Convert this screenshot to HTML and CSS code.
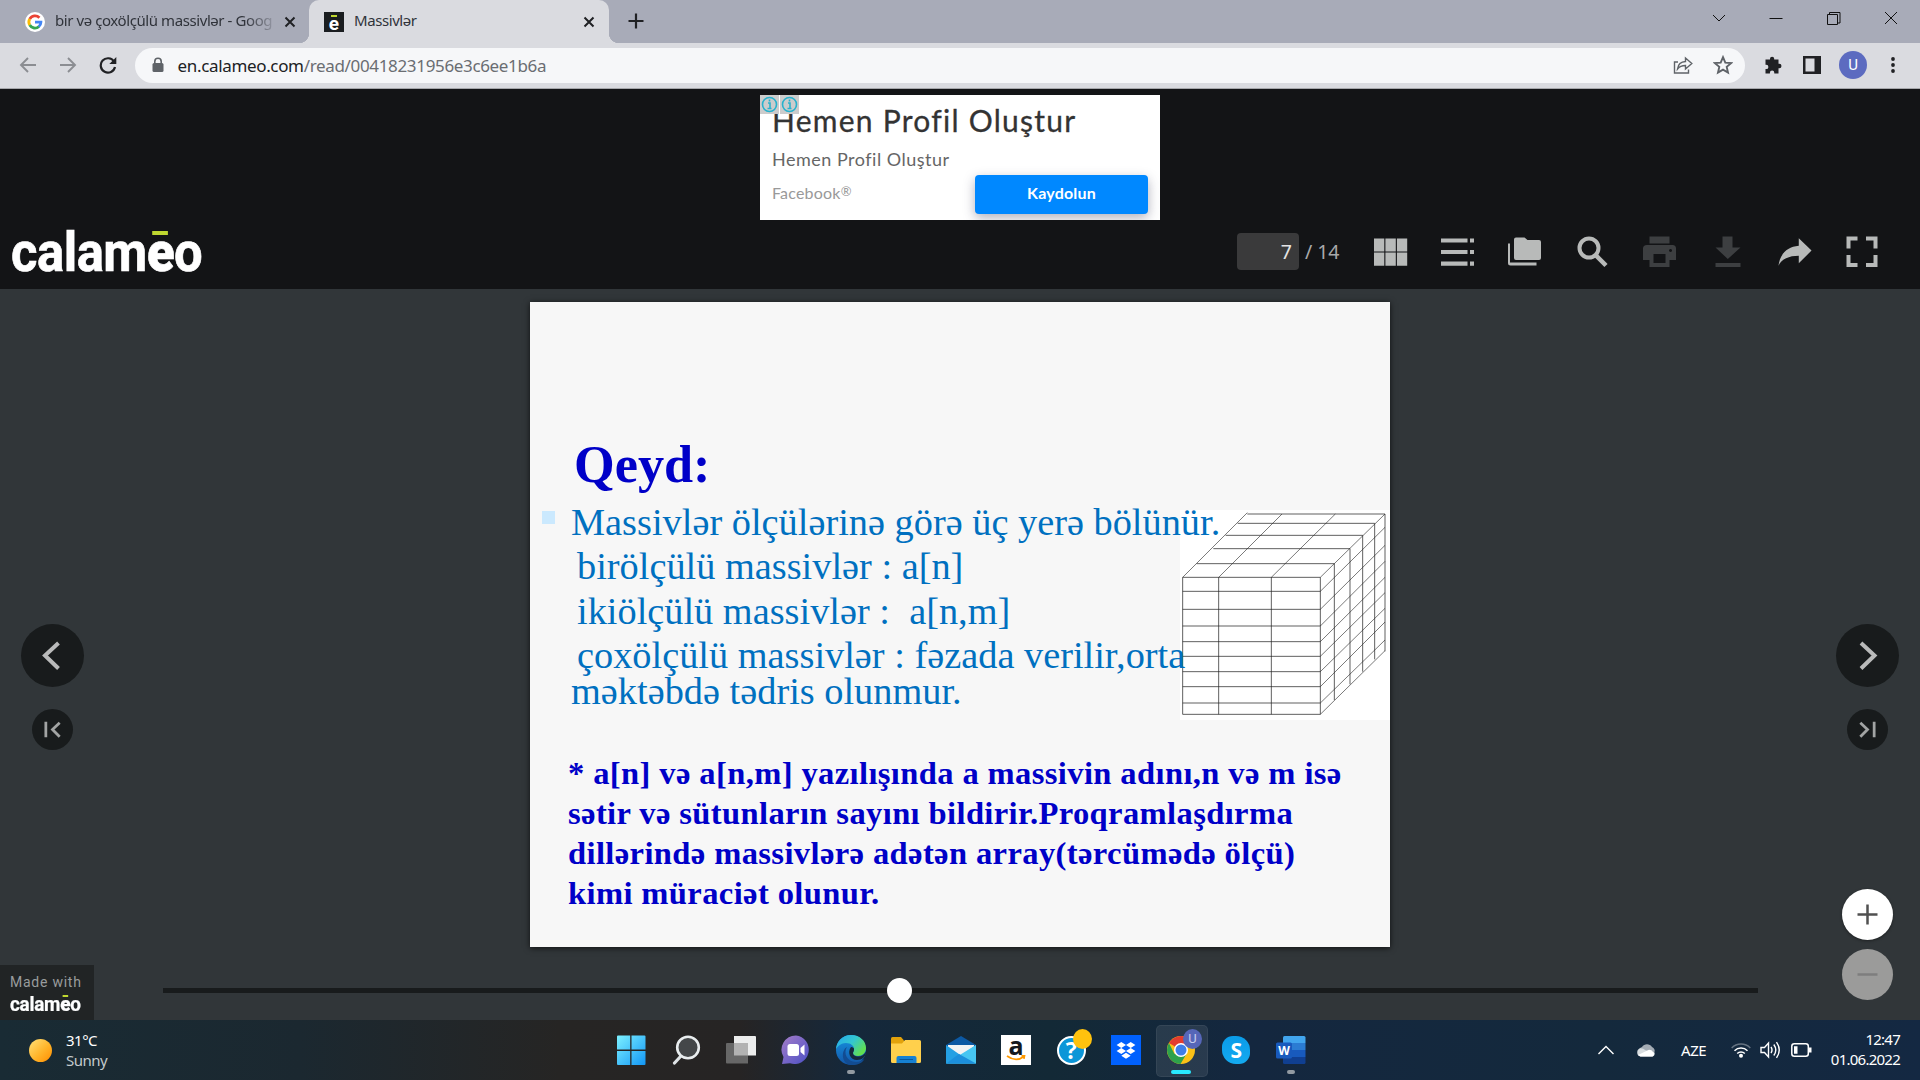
FILE: index.html
```html
<!DOCTYPE html>
<html lang="az">
<head>
<meta charset="utf-8">
<title>Massivlər</title>
<link rel="stylesheet" href="styles.css">
</head>
<body>
<div class="tabs">
  <div class="tab tab-idle">
    <svg class="fav" viewBox="0 0 20 20"><circle cx="10" cy="10" r="10" fill="#fff"/><g fill="none" stroke-width="2.8"><path d="M4.7 7A6 6 0 0 1 14.4 5.7" stroke="#ea4335"/><path d="M4.7 13A6 6 0 0 1 4.7 7" stroke="#fbbc05"/><path d="M14 14.5A6 6 0 0 1 4.7 13" stroke="#34a853"/><path d="M10 10.2H15.9A6 6 0 0 1 13.7 14.7" stroke="#4285f4"/></g></svg>
    <span class="tab-title fade">bir və çoxölçülü massivlər - Goog</span>
    <svg class="x" viewBox="0 0 12 12"><path d="M1.5 1.5l9 9M10.5 1.5l-9 9"/></svg>
  </div>
  <div class="tab tab-on">
    <span class="fav fav-e"><i></i>e</span>
    <span class="tab-title">Massivlər</span>
    <svg class="x" viewBox="0 0 12 12"><path d="M1.5 1.5l9 9M10.5 1.5l-9 9"/></svg>
  </div>
  <svg class="plus" viewBox="0 0 16 16"><path d="M8 .5v15M.5 8h15"/></svg>
  <div class="wincontrols">
    <svg viewBox="0 0 14 14"><path d="M1 4l6 6 6-6"/></svg>
    <svg viewBox="0 0 14 14"><path d="M.5 7.5h13"/></svg>
    <svg viewBox="0 0 14 14"><path d="M.5 3.5h10v10h-10zM2.5 3.500v-2h10.500v10.500h-2.500"/></svg>
    <svg viewBox="0 0 14 14"><path d="M1 1l12 12M13 1L1 13"/></svg>
  </div>
</div>

<div class="toolbar">
  <svg class="nav dim" viewBox="0 0 18 18"><path d="M17 9H2M9 2L2 9l7 7"/></svg>
  <svg class="nav dim" viewBox="0 0 18 18"><path d="M1 9h15M9 2l7 7-7 7"/></svg>
  <svg class="nav reload" viewBox="0 0 18 18"><path d="M15 5.500A7.200 7.200 0 1 0 16 11"/><path d="M17.300 1v7h-7z" fill="#202124" stroke="none"/></svg>
  <div class="omnibox">
    <svg class="lock" viewBox="0 0 12 16"><path d="M2.800 7V4.500a3.200 3.200 0 0 1 6.400 0V7" fill="none" stroke="#5f6368" stroke-width="1.600"/><rect x=".5" y="6" width="11" height="9" rx="1.500" fill="#5f6368"/></svg>
    <span class="url">en.calameo.com<em>/read/00418231956e3c6ee1b6a</em></span>
    <svg class="omni-icon" viewBox="0 0 20 20"><path d="M5 7H1.500v11h14v-3.500M4.500 14c.6-4.800 3.600-7.300 8-7.500V3l6.300 5.500-6.300 5.500v-3.500c-3.600 0-6 .9-8 3.500z"/></svg>
    <svg class="omni-icon star" viewBox="0 0 20 20"><path d="M10 2.200l2.300 5.400 5.800.5-4.400 3.800 1.300 5.700-5-3-5 3 1.300-5.700L1.900 8.100l5.800-.5z"/></svg>
  </div>
  <svg class="ext" viewBox="0 0 20 20"><path d="M2.500 4.500h4.500V3.800a2.100 2.100 0 0 1 4.200 0v.7H15.500v4.300h.8a2.200 2.200 0 0 1 0 4.400h-.8V18.500h-4.200V17.800a2.200 2.200 0 0 0-4.400 0v.7H2.500v-4.400H3.200a2.200 2.200 0 0 0 0-4.400h-.7V4.500z" fill="#202124"/></svg>
  <svg class="panel" viewBox="0 0 18 18"><path d="M0 0h18v18H0zM2.500 2.500v13h9v-13z" fill="#202124" fill-rule="evenodd"/></svg>
  <span class="avatar">U</span>
  <svg class="dots" viewBox="0 0 4 18"><circle cx="2" cy="3" r="1.900"/><circle cx="2" cy="9" r="1.900"/><circle cx="2" cy="15" r="1.900"/></svg>
</div>

<header class="head">
  <div class="adband">
    <div class="ad">
      <div class="adchoices">
        <svg viewBox="0 0 19 19"><circle cx="9.500" cy="9.500" r="7"/><path d="M8 8h2v5M7.500 13.500h4M9.500 4.500v2"/></svg>
        <svg viewBox="0 0 19 19"><circle cx="9.500" cy="9.500" r="7"/><path d="M8 8h2v5M7.500 13.500h4M9.500 4.500v2"/></svg>
      </div>
      <div class="ad-title">Hemen Profil Oluştur</div>
      <div class="ad-sub">Hemen Profil Oluştur</div>
      <div class="ad-row"><span class="ad-brand">Facebook<sup>®</sup></span><span class="ad-btn">Kaydolun</span></div>
    </div>
  </div>
  <div class="bar">
    <div class="logo"><span>calam<b>e</b>o</span></div>
    <div class="tools">
      <span class="pagebox">7</span><span class="total">/ 14</span>
      <span class="tool"><svg viewBox="0 0 34 32"><path d="M0 2.500h10.300v13H0zM11.400 2.500h10.400v13H11.400zM22.900 2.500h10.300v13H22.900zM0 16.500h10.300v13.200H0zM11.400 16.500h10.400v13.200H11.400zM22.900 16.500h10.300v13.200H22.900z"/></svg></span>
      <span class="tool"><svg viewBox="0 0 34 32"><path d="M0 2.500h26.500v4H0zM29 2.500h4v4h-4zM0 14h26.500v4H0zM29 14h4v4h-4zM0 25.500h26.500v4.200H0zM29 25.500h4v4.200h-4z"/></svg></span>
      <span class="tool"><svg viewBox="0 0 34 32"><path d="M8 1.500h8.500L19.500 4H31q2 0 2 2v16q0 2-2 2H8q-2 0-2-2V3.500q0-2 2-2z"/><path d="M0 7.500h2V26.500h26.500v3H2.500q-2.500 0-2.500-2.500z"/></svg></span>
      <span class="tool"><svg viewBox="0 0 34 32"><circle cx="13" cy="12" r="9.500" fill="none" stroke="#b8bab9" stroke-width="4"/><path d="M19 18.500l11 11" stroke="#b8bab9" stroke-width="4.500"/></svg></span>
      <span class="tool off"><svg viewBox="0 0 34 32"><path fill-rule="evenodd" d="M6.500 .5h20v7h-20zM4 9h25.500q3.500 0 3.500 3.500V24h-6.500v7h-20v-7H0V12.500Q0 9 4 9zM10.500 18v9h12v-9zM27.500 13a1.500 1.500 0 1 0 .1 0z"/></svg></span>
      <span class="tool off"><svg viewBox="0 0 34 32"><path d="M11.500 .5h10v11h8L16.800 23 4.500 11.500h7zM4.500 27h25v4h-25z"/></svg></span>
      <span class="tool"><svg viewBox="0 0 36 32"><path d="M22 1.500L35.500 14.500 22 28v-8C11.500 20 4 23.500.5 30.500 2 19 9 10.500 22 9.500z"/></svg></span>
      <span class="tool"><svg viewBox="0 0 34 32"><path d="M1.500 .5h11v4h-7v8h-4zM21 .5h11.500v12h-4v-8H21zM1.500 19h4v8h7v4h-11zM28.500 19h4v12H21v-4h7.500z"/></svg></span>
    </div>
  </div>
</header>

<main class="viewer">
  <div class="side left">
    <span class="round"><svg viewBox="0 0 63 63"><path d="M37.500 19L24 31.500 37.500 44.500"/></svg></span>
    <span class="round small"><svg viewBox="0 0 40 40"><path d="M13.500 12.500v15M27 13.500l-7 6.500 7 7"/></svg></span>
    <div class="made"><span>Made with</span><div class="logo mini"><span>calam<b>e</b>o</span></div></div>
  </div>
  <div class="center">
    <article class="slide">
      <svg class="cube" viewBox="60 60 630 630"><path fill="#fff" d="M60 60h630v630H60z"/><g fill="none" stroke="#222" stroke-opacity=".72" stroke-width="3"><path d="M68 262H481V673H68zM68 304H481M68 358H481M68 408H481M68 455H481M68 499H481M68 545H481M68 590H481M68 639H481M176 262V673M334 262V673M110 221H523V630M160 176H570V583M197 136H608V545M233 100H644V508M262 72H675V484"/><path stroke-opacity=".6" d="M68 262L262 68M176 262L366 72M334 262L526 72M481 262L675 72M481 304L675 112M481 358L675 166M481 408L675 214M481 455L675 262M481 499L675 308M481 545L675 355M481 590L675 396M481 639L675 450M481 673L675 482"/></g></svg>
      <h1>Qeyd:</h1>
      <div class="list">
        <i class="bullet"></i>
        <div>
          <p>Massivlər ölçülərinə görə üç yerə bölünür.</p>
          <p class="in">birölçülü massivlər : a[n]</p>
          <p class="in">ikiölçülü massivlər :&nbsp; a[n,m]</p>
          <p class="in">çoxölçülü massivlər : fəzada verilir,orta</p>
          <p class="tight">məktəbdə tədris olunmur.</p>
        </div>
      </div>
      <div class="note">
        <p>* a[n] və a[n,m] yazılışında a massivin adını,n və m isə</p>
        <p>sətir və sütunların sayını bildirir.Proqramlaşdırma</p>
        <p>dillərində massivlərə adətən array(tərcümədə ölçü)</p>
        <p>kimi müraciət olunur.</p>
      </div>
    </article>
    <div class="slider"><i class="knob"></i></div>
  </div>
  <div class="side right">
    <span class="round"><svg viewBox="0 0 63 63"><path d="M25 19l13.500 12.500L25 44.500"/></svg></span>
    <span class="round small"><svg viewBox="0 0 40 40"><path d="M26.500 12.500v15M13 13.500l7 6.500-7 7"/></svg></span>
    <span class="zoom"><svg viewBox="0 0 51 51"><path d="M25.500 15.500v20M15.500 25.500h20"/></svg></span>
    <span class="zoom off"><svg viewBox="0 0 51 51"><path d="M15.500 25.500h20"/></svg></span>
  </div>
</main>

<footer class="taskbar">
  <div class="weather">
    <i class="sun"></i>
    <div><div>31°C</div><div class="cond">Sunny</div></div>
  </div>
  <div class="apps">
    <span class="app"><svg viewBox="0 0 30 30"><defs><linearGradient id="w" x1="0" y1="0" x2="1" y2="1"><stop offset="0" stop-color="#7df1ff"/><stop offset="1" stop-color="#1296f5"/></linearGradient></defs><path fill="url(#w)" d="M2 .5h12.200v14H1V1.500q0-1 1-1zM15.500.5H28.500q1 0 1 1v13h-14zM1 16h13.200v14H2q-1 0-1-1zM15.500 16h14v13q0 1-1 1h-13z"/></svg></span>
    <span class="app"><svg viewBox="0 0 30 30"><path d="M10 21L3.500 28" stroke="#dfe3e6" stroke-width="3.200" stroke-linecap="round"/><circle cx="17" cy="12.500" r="10.800" fill="#444749" stroke="#e9edef" stroke-width="2.600"/></svg></span>
    <span class="app"><svg viewBox="0 0 30 30"><path d="M8 1h21q1 0 1 1v18.500H8z" fill="#eceded"/><path d="M1 8h21v20.500H1q-1 0-1-1V9q0-1 1-1z" fill="#676767"/><path d="M8 8h14v12.500H8z" fill="#b2b2b2"/></svg></span>
    <span class="app"><svg viewBox="0 0 30 30"><defs><linearGradient id="t" x1="0" y1="0" x2="1" y2="1"><stop offset="0" stop-color="#a77fc4"/><stop offset=".3" stop-color="#8a6fc8"/><stop offset="1" stop-color="#4b50c4"/></linearGradient></defs><path d="M15 .5A14.300 14.300 0 1 1 9 28.300L1 29l1.500-7A14.300 14.300 0 0 1 15 .5z" fill="url(#t)"/><rect x="6.500" y="9" width="11.500" height="12" rx="2.500" fill="#fff"/><path d="M19.500 13l4-3.500v11l-4-3.500z" fill="#fff"/></svg></span>
    <span class="app"><svg viewBox="0 0 30 30"><defs><linearGradient id="e1" x1="0" y1="0" x2="1" y2=".6"><stop offset="0" stop-color="#24a7ee"/><stop offset=".55" stop-color="#34c7cf"/><stop offset="1" stop-color="#62e04f"/></linearGradient><linearGradient id="e2" x1="0" y1="0" x2="0" y2="1"><stop offset="0" stop-color="#1595e3"/><stop offset="1" stop-color="#1356a8"/></linearGradient></defs><circle cx="15" cy="15" r="15" fill="url(#e2)"/><path d="M15 0C24 0 30 6 30 13c0 5-4 8-8 8-3 0-5-1-5-3 0-1 1-1.500 1-4 0-3-3-6-8-6-6 0-10 5-10 7C0 7 6 0 15 0z" fill="url(#e1)"/><path d="M11 12c-4 6 0 15 9 15 4 0 6-1.500 8.500-3C25 30 19 30 15 30 5 29 5 15 11 12z" fill="#124c92"/><path d="M18 14c0 3-1 3-1 4 0 2 2 3.500 5 3.500 3.500 0 6.500-2 8-5C30 22 26 25 21 25c-7 0-10-8-6-13 2 0 3 1 3 2z" fill="#15293b"/></svg><i></i></span>
    <span class="app"><svg viewBox="0 0 30 30"><path d="M0 3.500q0-1.500 1.500-1.500H10l3 3.500V12H0z" fill="#e2a20b"/><path d="M0 8.500h11l3-3.500h14.500Q30 5 30 6.500v20q0 1.500-1.500 1.500h-27Q0 28 0 26.500z" fill="#ffd04c"/><path d="M5.500 28v-5q0-2 2-2h16q2 0 2 2v5z" fill="#1681d3"/><path d="M8.500 24.500h13.500" stroke="#0a579b"/></svg></span>
    <span class="app"><svg viewBox="0 0 30 30"><path d="M0 10L15 1l15 9v4H0z" fill="#0c59a4"/><path d="M2 10h26v10H2z" fill="#f2f3f4"/><path d="M0 10l15 10.500L30 10v18.500H0z" fill="#24a0e4"/><path d="M0 28.500L30 10v18.500z" fill="#47c6f2"/><path d="M13 19L30 28.500H0z" fill="#1c8fdc"/></svg></span>
    <span class="app"><span class="amazon">a<svg viewBox="0 0 20 6"><path d="M1 1q9 6.500 17 .5M15.500.8l3 0-.6 3" fill="none" stroke="#f90" stroke-width="1.700"/></svg></span></span>
    <span class="app"><span class="help">?</span><b class="badge yellow"></b></span>
    <span class="app"><svg viewBox="0 0 30 30"><path fill="#0061fe" d="M0 0h30v30H0z"/><path fill="#fff" d="M10.300 7l4.700 3-4.700 3-4.700-3zM19.700 7l4.700 3-4.700 3-4.700-3zM10.300 13l4.700 3-4.700 3-4.700-3zM19.700 13l4.700 3-4.700 3-4.700-3zM15 17.800l4.700 3-4.700 3-4.700-3z"/></svg></span>
    <span class="app active"><svg viewBox="0 0 30 30"><circle cx="15" cy="15" r="14" fill="#fbc116"/><path d="M15 15L2.900 8A14 14 0 0 1 27.100 8z" fill="#e33b2e"/><path d="M15 15L8.500 19 2.900 8A14 14 0 0 0 14.500 29L21 18z" fill="#2da14b"/><path d="M15 8h12.100L15 15 8 11z" fill="#e33b2e"/><circle cx="15" cy="15" r="7" fill="#fff"/><circle cx="15" cy="15" r="5.500" fill="#3f7ee8"/></svg><b class="badge">U</b><i></i></span>
    <span class="app"><span class="skype">S</span></span>
    <span class="app"><svg viewBox="0 0 30 30"><path d="M7 2.500q0-1.500 1.500-1.500h19.500q1.500 0 1.500 1.500V8H7z" fill="#41a5ee"/><path d="M7 8h22.500v7H7z" fill="#2b7cd3"/><path d="M7 15h22.500v7H7z" fill="#185abd"/><path d="M7 22h22.500v5.500q0 1.500-1.500 1.500H8.500Q7 29 7 27.500z" fill="#103f91"/><rect y="7.500" width="16" height="16" rx="1.500" fill="#185abd"/><text x="8" y="19.800" class="wtext">W</text></svg><i></i></span>
  </div>
  <div class="tray">
    <svg class="up" viewBox="0 0 16 10"><path d="M.5 9L8 1.500 15.500 9" fill="none" stroke="#fff" stroke-width="1.400"/></svg>
    <svg class="cloud" viewBox="0 0 20 14"><path d="M3 9a4 4 0 0 1 3-5 6 6 0 0 1 10 0 4 4 0 0 1 2 6z" fill="#a5adb5"/><path d="M4.500 13.500a4.200 4.200 0 0 1 0-8.200q3 0 5 2l9 2.200a3 3 0 0 1-2 4z" fill="#d8dde0"/><path d="M2 12L13 6.800q3 .2 3.800 2a2.700 2.700 0 0 1-.3 4.700h-12z" fill="#fff"/></svg>
    <span class="lang">AZE</span>
    <svg class="wifi" viewBox="0 0 20 16"><g fill="none" stroke="#fff" stroke-width="1.500"><path d="M.7 6a13 13 0 0 1 18.600 0" opacity=".35"/><path d="M3.500 8.800a9.200 9.200 0 0 1 13 0M6.200 11.500a5.400 5.400 0 0 1 7.600 0"/></g><circle cx="10" cy="13.700" r="2" fill="#fff"/></svg>
    <svg class="vol" viewBox="0 0 21 18"><g fill="none" stroke="#fff" stroke-width="1.400"><path d="M1 6.500h3.500L8.500 2v14l-4-4.500H1z"/><path d="M11 6q2 3 0 6M13.800 3.500q4 5.500 0 11M16.500 1.200q5.500 7.800 0 15.600"/></g></svg>
    <svg class="bat" viewBox="0 0 21 14"><rect x=".8" y=".8" width="16.500" height="12.400" rx="2.500" fill="none" stroke="#fff" stroke-width="1.500"/><path d="M3 3.200h3.500v7.600H3zM18 4.500h2.500v5H18z" fill="#fff"/></svg>
    <div class="clock"><div>12:47</div><div>01.06.2022</div></div>
  </div>
</footer>
</body>
</html>
```
FILE: styles.css
```css
* { box-sizing: border-box; }
body { margin: 0; width: 1920px; height: 1080px; overflow: hidden; display: flex; flex-direction: column; font-family: "Noto Sans", "Open Sans", sans-serif; background: #131416; }
svg { display: block; flex: none; }
p, h1 { margin: 0; }

.tabs { height: 43px; background: #a8abb8; display: flex; align-items: flex-start; flex: none; }
.tab { display: flex; align-items: center; height: 43px; flex: none; }
.tab-idle { width: 309px; padding-left: 25px; }
.tab-on { position: relative; width: 300px; padding-left: 15px; background: #dadbe0; border-radius: 10px 10px 0 0; }
.tab-on::before, .tab-on::after { content: ""; position: absolute; bottom: 0; width: 10px; height: 10px; }
.tab-on::before { left: -10px; background: radial-gradient(circle at 0 0, transparent 10px, #dadbe0 10.5px); }
.tab-on::after { right: -10px; background: radial-gradient(circle at 100% 0, transparent 10px, #dadbe0 10.5px); }
.fav { width: 20px; height: 20px; margin-right: 10px; flex: none; }
.fav-e { position: relative; background: #1a1d20; color: #fff; font: bold 19px/23px Roboto, sans-serif; text-align: center; }
.fav-e i { position: absolute; left: 7px; top: 3px; width: 6px; height: 2px; background: #bfd730; }
.tab-title { width: 220px; white-space: nowrap; overflow: hidden; font-size: 15px; letter-spacing: -.42px; color: #30333a; line-height: 22px; padding-bottom: 3px; }
.tab-on .tab-title { width: 228px; margin-right: 1px; }
.fade { -webkit-mask-image: linear-gradient(90deg, #000 190px, transparent 224px); mask-image: linear-gradient(90deg, #000 190px, transparent 224px); }
.x { width: 12px; height: 12px; margin-left: 9px; fill: none; stroke: #202124; stroke-width: 2; }
.tab-on .x { margin-left: 0; }
.plus { width: 16px; height: 16px; margin: 13px 0 0 19px; fill: none; stroke: #202124; stroke-width: 2.2; }
.wincontrols { margin-left: auto; display: flex; gap: 43.500px; padding: 11px 22px 0 0; }
.wincontrols svg { width: 14px; height: 14px; fill: none; stroke: #111; stroke-width: 1; }

.toolbar { height: 46px; flex: none; background: #dadbe0; border-bottom: 1px solid #a6a7ab; display: flex; align-items: center; padding: 0 25px 1px 19px; }
.nav { width: 18px; height: 18px; margin-right: 22px; fill: none; stroke-width: 1.9; stroke: #202124; }
.nav.dim { stroke: #8b8d92; }
.nav.reload { margin-right: 18px; stroke-width: 2.2; }
.omnibox { width: 1610px; height: 35px; border-radius: 18px; background: #f6f7f9; display: flex; align-items: center; padding: 0 12px 0 16.500px; }
.lock { width: 12px; height: 16px; }
.url { font-size: 17px; letter-spacing: -.34px; color: #202124; margin: 1px auto 0 14px; white-space: nowrap; }
.url em { font-style: normal; color: #6a6d72; }
.omni-icon { width: 20px; height: 20px; fill: none; stroke: #5f6368; stroke-width: 1.4; margin-left: 20px; }
.star { stroke-width: 1.9; }
.ext { width: 20px; height: 20px; margin-left: 18px; }
.panel { width: 18px; height: 18px; margin-left: 20px; }
.avatar { width: 28px; height: 28px; border-radius: 50%; background: #5c6bc0; color: #fff; font: 15px/28px Roboto, sans-serif; text-align: center; margin-left: 18px; }
.dots { width: 4px; height: 18px; margin-left: auto; fill: #202124; }

.head { height: 200px; flex: none; display: flex; flex-direction: column; }
.adband { height: 131px; padding-top: 6px; display: flex; justify-content: center; }
.ad { position: relative; width: 400px; height: 125px; background: #fff; padding: 5px 12px 0 12px; font-family: Lato, sans-serif; white-space: nowrap; overflow: hidden; }
.adchoices { position: absolute; left: 0; top: 0; display: flex; gap: 1px; }
.adchoices svg { width: 19px; height: 19px; background: #ccc; fill: none; stroke: #28b2cd; stroke-width: 1.6; }
.ad-title { font-size: 30px; line-height: 40px; color: #333; letter-spacing: 1.25px; -webkit-text-stroke: .3px #333; }
.ad-sub { font-size: 18px; line-height: 24px; margin-top: 7px; color: #666; letter-spacing: .5px; }
.ad-row { display: flex; justify-content: space-between; margin-top: 4px; }
.ad-brand { font-size: 16px; line-height: 36px; color: #999; letter-spacing: .2px; }
.ad-brand sup { font-size: 13px; line-height: 0; vertical-align: 3px; }
.ad-btn { width: 173px; height: 39px; border-radius: 4px; background: #08f; color: #fff; font-weight: 700; font-size: 16px; line-height: 36px; letter-spacing: .2px; text-align: center; box-shadow: 0 4px 12px rgba(60, 60, 90, .4); }

.bar { height: 69px; padding: 0 24px 6px 11px; display: flex; align-items: center; justify-content: space-between; }
.logo { width: 190px; height: 60px; font: bold 55px/60px Roboto, sans-serif; color: #fff; }
.logo > span { display: inline-block; transform: scaleX(.923); transform-origin: 0 50%; letter-spacing: -.5px; -webkit-text-stroke: .012em #fff; }
.logo b { position: relative; }
.logo b::before { content: ""; position: absolute; left: .11em; top: .2em; width: .31em; height: .09em; background: #bfd730; }
.tools { display: flex; align-items: center; }
.pagebox { width: 62px; height: 37px; border-radius: 4px; background: #3a3a3b; color: #e4e4e4; font-size: 19.500px; line-height: 37px; text-align: right; padding-right: 7px; }
.total { font-size: 19.500px; color: #a8a9aa; width: 58px; padding-left: 6px; }
.tool { width: 67.400px; display: flex; justify-content: center; fill: #b8bab9; }
.tool svg { width: 34px; height: 32px; }
.tool.off { fill: #3d3f41; }

.viewer { height: 731px; flex: none; background: #313639; display: flex; }
.side { width: 105px; height: 731px; display: flex; flex-direction: column; align-items: center; padding-top: 335px; flex: none; }
.round { width: 63px; height: 63px; border-radius: 50%; background: #181b1c; fill: none; stroke: #b9baba; stroke-width: 4; flex: none; }
.round.small { width: 41px; height: 41px; margin-top: 22px; stroke: #a2a4a4; stroke-width: 2.700; }
.made { margin-top: auto; align-self: flex-start; width: 94px; height: 55px; background: #212425; color: #999c9d; padding: 6px 0 0 10px; font: 14px/22px Roboto, sans-serif; letter-spacing: .75px; }
.made span { display: block; }
.mini { width: 70px; height: 22px; font-size: 20.500px; line-height: 22px; letter-spacing: 0; }
.mini > span { display: inline-block !important; letter-spacing: -.3px; }
.mini b::before { top: .13em; }
.zoom { width: 51px; height: 51px; border-radius: 50%; background: #fff; fill: none; stroke: #505050; stroke-width: 2.500; margin-top: 139px; box-shadow: 0 1px 3px rgba(0, 0, 0, .4); flex: none; }
.zoom.off { margin-top: 9px; background: #9b9b9a; stroke: #7e7e7e; box-shadow: none; }

.center { flex: 1; display: flex; flex-direction: column; align-items: center; padding-top: 13px; }
.slide { position: relative; width: 860px; height: 645px; flex: none; background: #f7f7f7; box-shadow: 0 1px 6px rgba(0, 0, 0, .7); padding: 132px 0 0 0; font-family: "Liberation Serif", "Times New Roman", serif; white-space: nowrap; }
.cube { position: absolute; left: 650px; top: 208px; width: 210px; height: 210px; }
.slide h1 { position: relative; margin-left: 44px; font-size: 52.300px; line-height: 60px; color: #0000c8; }
.list { position: relative; display: flex; margin: 6px 0 0 12px; color: #0070c0; font-size: 38.350px; line-height: 44.300px; }
.bullet { width: 13px; height: 13px; margin: 11px 16px 0 0; background: #cbe9fe; }
.in { padding-left: 6px; }
.tight { line-height: 28px; }
.note { position: relative; margin: 48px 0 0 38px; font-weight: 700; font-size: 32.600px; line-height: 40px; letter-spacing: .37px; color: #0000c8; }
.slider { position: relative; width: 1595px; height: 5px; margin-top: 41px; background: #181b1c; }
.knob { position: absolute; left: 724.500px; top: -10px; width: 25px; height: 25px; border-radius: 50%; background: #fff; }

.taskbar { height: 60px; flex: none; display: grid; grid-template-columns: 603px 716px 1fr; color: #fff; background: linear-gradient(90deg, #192b34 0, #1b2830 300px, #262524 560px, #262424 740px, #15283b 850px, #132936 1050px, #14273f 1250px, #14293c 1600px, #142842 1920px); }
.weather { display: flex; align-items: center; padding-left: 29px; font-size: 15px; line-height: 20px; letter-spacing: -.5px; }
.weather .cond { color: #c3c9cc; }
.sun { width: 23px; height: 23px; border-radius: 50%; background: linear-gradient(135deg, #ffe17a, #ffb52a 55%, #ff8c00); margin-right: 14px; }
.apps { display: grid; grid-template-columns: repeat(13, 1fr); }
.app { position: relative; display: flex; justify-content: center; padding-top: 15px; height: 60px; }
.app > svg { width: 30px; height: 30px; position: relative; }
.app > i { position: absolute; left: 50%; margin-left: -4px; top: 50px; width: 8px; height: 4px; border-radius: 2px; background: #929aa2; }
.active::before { content: ""; position: absolute; left: 2px; top: 5px; width: 50px; height: 50px; border-radius: 5px; background: rgba(255, 255, 255, .09); border: 1px solid rgba(255, 255, 255, .06); }
.active > i { width: 20px; margin-left: -10px; background: #29e9ff; }
.amazon { width: 30px; height: 30px; background: #fff; color: #14191f; font: bold 25px/20px "Open Sans", sans-serif; text-align: center; }
.amazon svg { width: 20px; height: 6px; margin: 0 auto; }
.help { width: 29px; height: 29px; margin-top: 1px; border-radius: 50%; border: 2px solid #fff; background: #0b96d8; color: #fff; font: bold 23px/25px "Open Sans", sans-serif; text-align: center; }
.badge { position: absolute; right: 7px; top: 9px; width: 19px; height: 20px; border-radius: 50%; background: #5666b8; color: #c7cdf0; font: 13px/20px Roboto, sans-serif; text-align: center; }
.badge.yellow { background: #ffc20e; }
.skype { width: 28px; height: 28px; margin-top: 1px; border-radius: 11px 14px 11px 14px; background: linear-gradient(#0a9be8, #14aaf0); color: #fff; font: bold 21px/28px "Open Sans", sans-serif; text-align: center; }
.wtext { font: bold 12px "Open Sans", sans-serif; fill: #fff; text-anchor: middle; }
.tray { display: flex; align-items: center; padding-left: 279px; font-size: 15px; line-height: 20px; letter-spacing: -.4px; }
.up { width: 16px; height: 10px; margin-right: 22px; }
.cloud { width: 20px; height: 14px; margin-right: 25px; }
.lang { width: 50px; }
.wifi { width: 20px; height: 16px; margin-right: 9px; }
.vol { width: 21px; height: 18px; margin-right: 10px; }
.bat { width: 21px; height: 14px; }
.clock { margin: -2px 0 0 auto; padding-right: 20px; text-align: right; letter-spacing: -.75px; }
```
